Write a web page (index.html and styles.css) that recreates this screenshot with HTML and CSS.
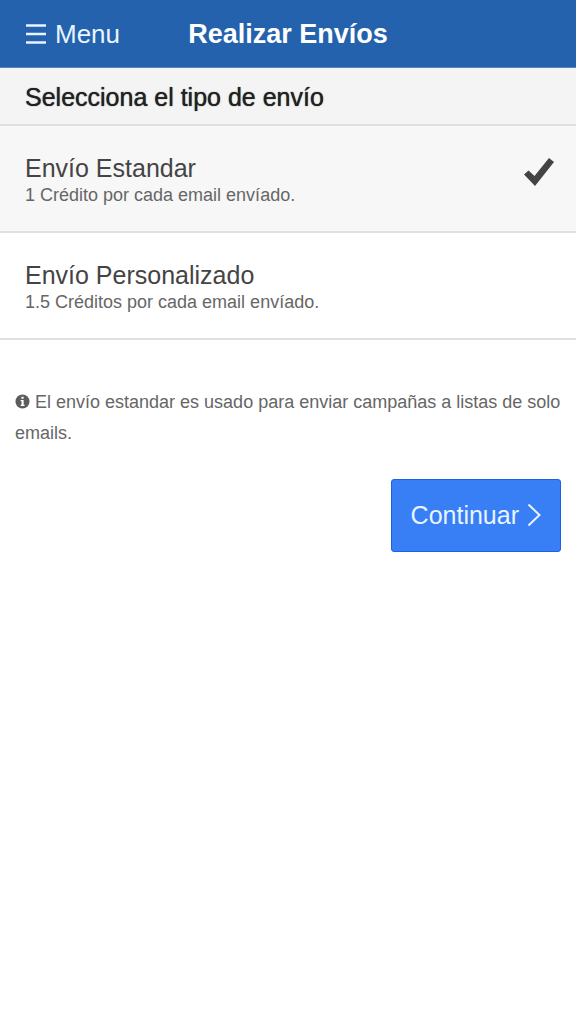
FILE: index.html
```html
<!DOCTYPE html>
<html lang="es">
<head>
<meta charset="utf-8">
<meta name="viewport" content="width=device-width, initial-scale=1">
<title>Realizar Envíos</title>
<link rel="stylesheet" href="styles.css">
</head>
<body>
<header class="bar">
  <button class="menu-button" type="button">
    <svg class="menu-icon" viewBox="0 0 22 20" aria-hidden="true"><path d="M1 1.5h20M1 10h20M1 18.5h20"/></svg>
    <span>Menu</span>
  </button>
  <h1 class="bar-title">Realizar Envíos</h1>
</header>
<main>
  <form>
    <fieldset class="options">
      <legend class="divider">Selecciona el tipo de envío</legend>
      <label class="option">
        <input class="option-input" type="radio" name="tipo" value="estandar" checked>
        <span class="option-text">
          <span class="option-title">Envío Estandar</span>
          <span class="option-detail">1 Crédito por cada email envíado.</span>
        </span>
        <svg class="check-icon" viewBox="0 0 30 28" aria-hidden="true"><path d="M0 16.5L4.5 12.5L10.5 18L25 0L30 4L11 28Z"/></svg>
      </label>
      <label class="option">
        <input class="option-input" type="radio" name="tipo" value="personalizado">
        <span class="option-text">
          <span class="option-title">Envío Personalizado</span>
          <span class="option-detail">1.5 Créditos por cada email envíado.</span>
        </span>
        <svg class="check-icon" viewBox="0 0 30 28" aria-hidden="true"><path d="M0 16.5L4.5 12.5L10.5 18L25 0L30 4L11 28Z"/></svg>
      </label>
    </fieldset>
    <div class="content">
      <p class="note"><svg class="info-icon" viewBox="0 0 16 16" aria-hidden="true"><circle cx="8" cy="8" r="7.5"/><path d="M6.8 3h2.4v2H6.8zM6 6.5h3.2v5h1v1.3H6v-1.3h1V7.8H6z"/></svg> El envío estandar es usado para enviar campañas a listas de solo emails.</p>
      <button class="continue-button" type="submit">
        <span>Continuar</span>
        <svg class="chevron-icon" viewBox="0 0 14 24" aria-hidden="true"><path d="M1.5 1.5L12.5 12L1.5 22.5"/></svg>
      </button>
    </div>
  </form>
</main>
</body>
</html>
```

FILE: styles.css
```css
* {
  box-sizing: border-box;
}

body {
  margin: 0;
  background: #fff;
  color: #444;
  font-family: "Liberation Sans", Arial, sans-serif;
}

button {
  border: 0;
  font: inherit;
  cursor: pointer;
}

.bar {
  display: grid;
  grid-template-columns: 1fr auto 1fr;
  align-items: center;
  height: 68px;
  padding: 0 25px;
  border-bottom: 1px solid #5585c2;
  background: #2462ad;
  color: #fff;
}

.menu-button {
  display: flex;
  align-items: center;
  justify-self: start;
  gap: 8px;
  padding: 0;
  background: none;
  color: #e8f4ff;
  font-size: 26px;
  line-height: 32px;
}

.menu-icon {
  width: 22px;
  height: 20px;
  fill: none;
  stroke: currentColor;
  stroke-width: 2.4;
}

.bar-title {
  margin: 0;
  font-size: 27px;
  line-height: 32px;
}

.options {
  min-width: 0;
  margin: 0;
  padding: 0;
  border: 0;
}

.divider {
  width: 100%;
  padding: 15px 25px 12px;
  border-bottom: 2px solid #e0e0e0;
  background: #f4f4f4;
  color: #222;
  font-size: 25px;
  line-height: 29px;
  text-shadow: 0 0 1px #222;
}

.option {
  display: flex;
  align-items: center;
  justify-content: space-between;
  padding: 26px 22px 25px 25px;
  border-bottom: 2px solid #e0e0e0;
  cursor: pointer;
}

.option:has(:checked) {
  background: #f7f7f7;
}

.option-input {
  appearance: none;
  width: 0;
  height: 0;
  margin: 0;
}

.option-text {
  flex: 1;
}

.option-title,
.option-detail {
  display: block;
}

.option-title {
  font-size: 25px;
  line-height: 32px;
}

.option-detail {
  color: #666;
  font-size: 18px;
  line-height: 22px;
}

.check-icon {
  display: none;
  width: 30px;
  height: 28px;
  margin-bottom: 14px;
  fill: #444;
}

.option-input:checked ~ .check-icon {
  display: block;
}

.content {
  display: flex;
  flex-direction: column;
  padding: 47px 15px;
}

.note {
  margin: 0 0 30px;
  color: #666;
  font-size: 18px;
  line-height: 31px;
}

.info-icon {
  width: 15px;
  height: 15px;
  vertical-align: -1px;
  fill: #5c5c5c;
}

.info-icon path {
  fill: #fff;
}

.continue-button {
  display: flex;
  align-items: center;
  align-self: flex-end;
  gap: 8px;
  padding: 19px 19px 20px;
  border: 1px solid #1b62df;
  border-radius: 3px;
  background: #387ef5;
  color: #e8f4ff;
  font-size: 25px;
  line-height: 32px;
}

.chevron-icon {
  width: 14px;
  height: 24px;
  fill: none;
  stroke: currentColor;
  stroke-width: 2;
}
```
